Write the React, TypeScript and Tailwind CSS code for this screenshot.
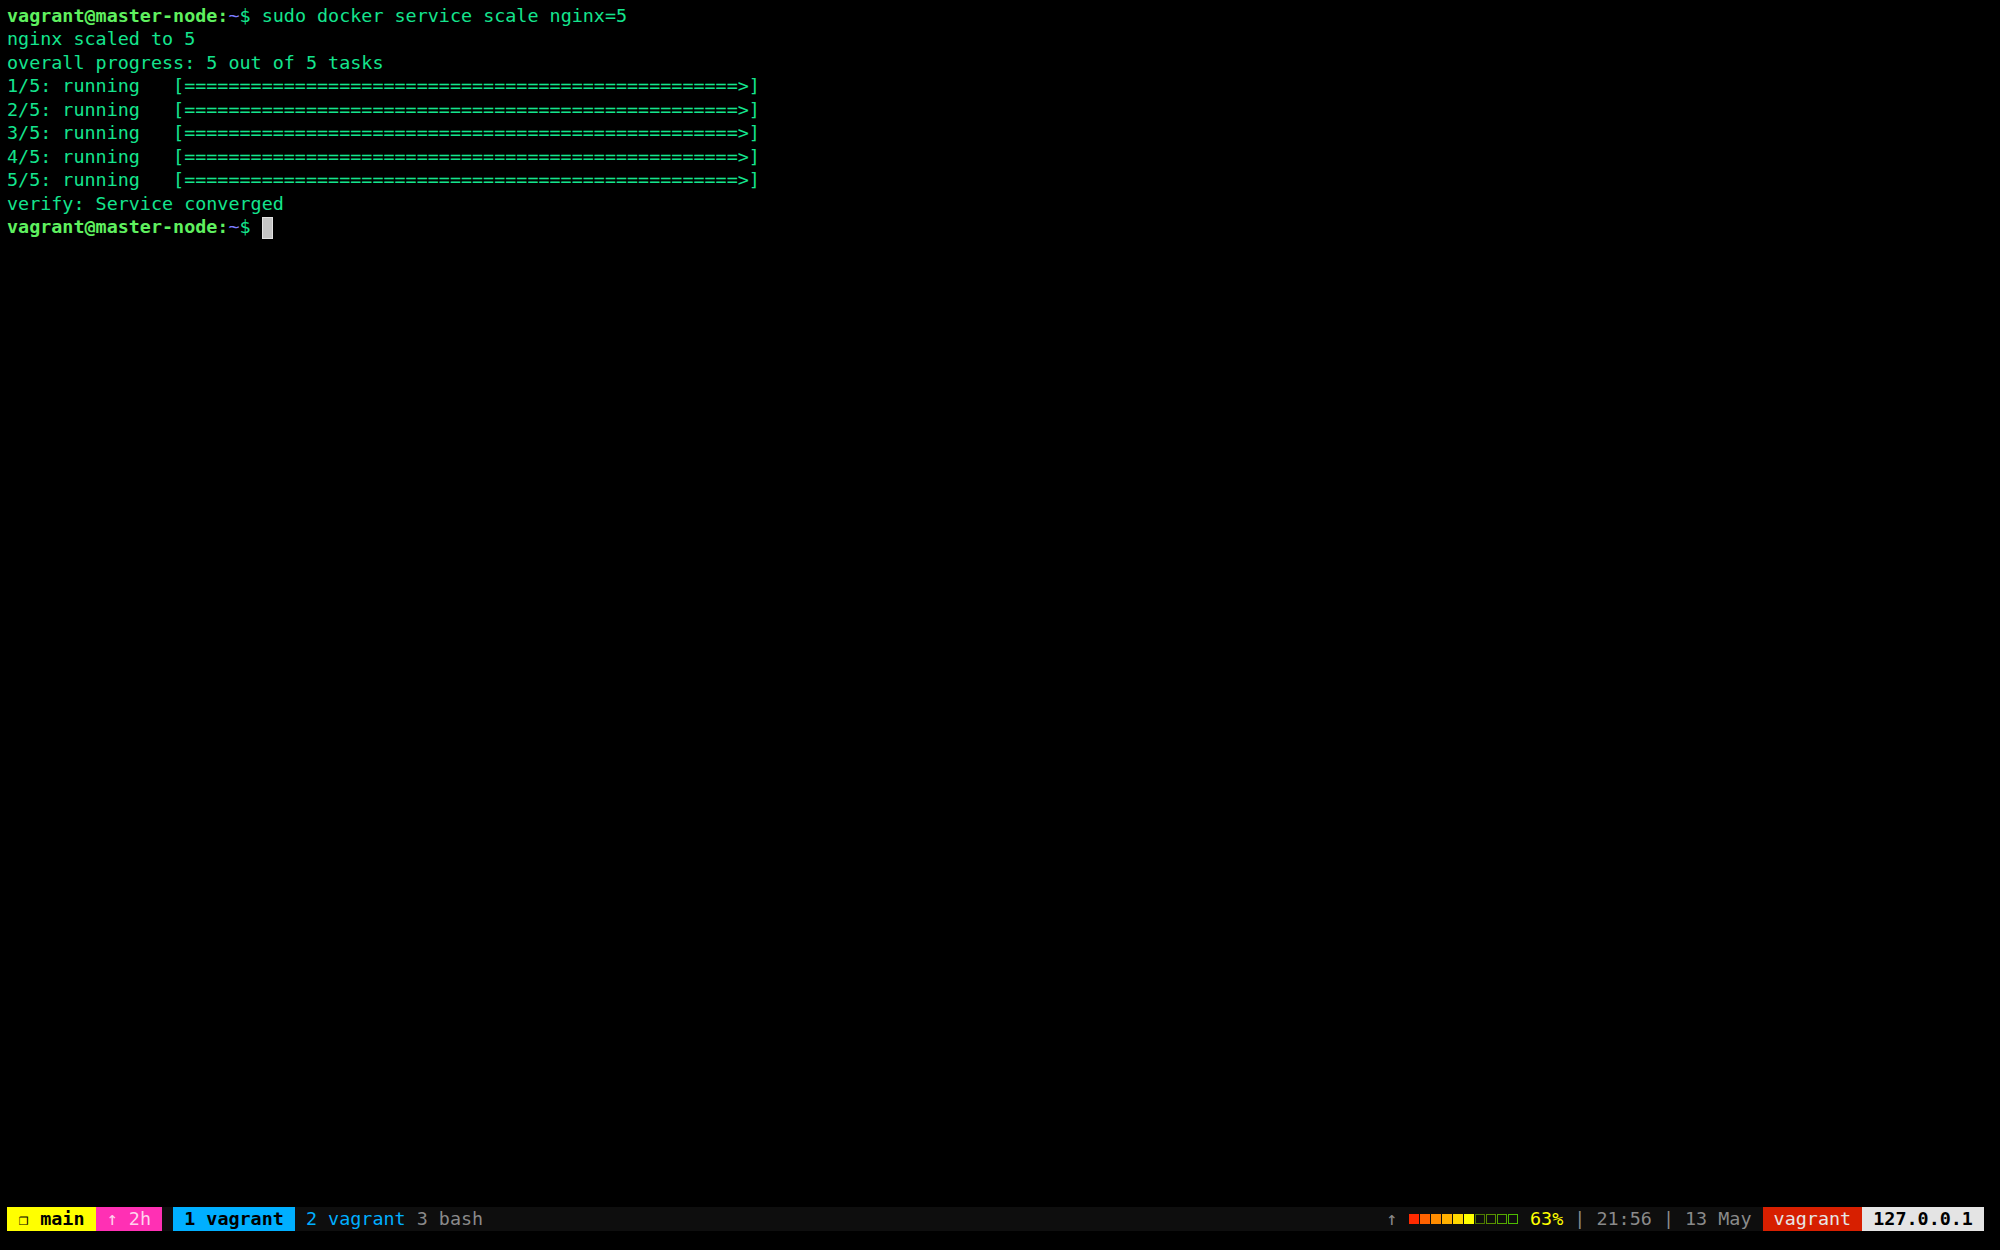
const bar = '[' + '='.repeat(50) + '>]'

const tasks = ['1/5', '2/5', '3/5', '4/5', '5/5']

const filled = ['#ff2a00', '#ff6200', '#ff8c00', '#ffb000', '#ffd700', '#ffff00']
const empty = ['#4d7a00', '#5a9000', '#55a800', '#4cbc00']

function Prompt() {
  return (
    <>
      <span className="font-bold text-[#5ff05f]">vagrant@master-node:</span>
      <span className="text-[#7c7cff]">~</span>
      <span>$ </span>
    </>
  )
}

export default function App() {
  return (
    <div className="h-screen w-full bg-black flex flex-col font-['DejaVu_Sans_Mono',monospace] text-[18.4px] leading-[23.55px] text-[#14e48e]">
      <div className="pl-[7px] pt-[3.5px] whitespace-pre">
        <div>
          <Prompt />
          sudo docker service scale nginx=5
        </div>
        <div>nginx scaled to 5</div>
        <div>overall progress: 5 out of 5 tasks</div>
        {tasks.map((t) => (
          <div key={t}>{t + ': running   ' + bar}</div>
        ))}
        <div>verify: Service converged</div>
        <div className="flex items-center">
          <Prompt />
          <span className="inline-block w-[11px] h-[22px] bg-[#c4c4c4] border border-[#e2e2e2] mt-[1px]"></span>
        </div>
      </div>

      <div className="mt-auto mb-[19px] ml-[7px] mr-[16px] h-[24px] leading-[24px] bg-[#0e0e0e] flex justify-between whitespace-pre">
        <div className="flex">
          <span className="bg-[#ffff00] text-black">
            {' '}
            <span className="inline-block w-[11.08px] text-center text-[16px]">❐</span>
            <span className="font-bold"> main </span>
          </span>
          <span className="bg-[#ff30b4] text-[#ffd4ee]">
            {' '}
            <span className="inline-block w-[1ch] text-center">↑</span>
            {' 2h '}
          </span>
          <span> </span>
          <span className="bg-[#00afff] text-black font-bold"> 1 vagrant </span>
          <span className="text-[#00afff]"> 2 vagrant </span>
          <span className="text-[#8a8a8a]">3 bash</span>
        </div>

        <div className="flex">
          <span className="inline-block w-[1ch] text-center text-[#8a8a8a]">↑</span>
          <span> </span>
          {filled.map((c) => (
            <span key={c} className="inline-flex w-[1ch] h-[24px] items-center justify-center">
              <span className="w-[10px] h-[10px]" style={{ backgroundColor: c }}></span>
            </span>
          ))}
          {empty.map((c) => (
            <span key={c} className="inline-flex w-[1ch] h-[24px] items-center justify-center">
              <span className="w-[10px] h-[10px] border-[1.5px]" style={{ borderColor: c }}></span>
            </span>
          ))}
          <span className="text-[#ffff00]"> 63%</span>
          <span className="text-[#8a8a8a]"> | 21:56 | 13 May </span>
          <span className="bg-[#d71f00] text-[#e6e6e6]"> vagrant </span>
          <span className="bg-[#e4e4e4] text-black font-bold"> 127.0.0.1 </span>
        </div>
      </div>
    </div>
  )
}
